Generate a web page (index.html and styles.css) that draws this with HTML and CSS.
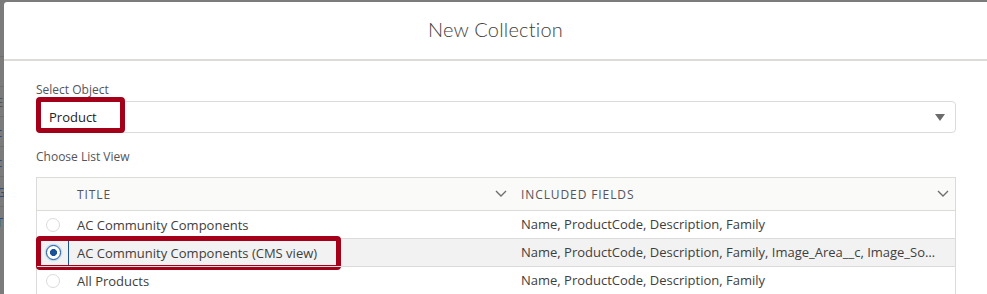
FILE: index.html
```html
<!DOCTYPE html>
<html lang="en">
<head>
  <meta charset="UTF-8">
  <title>New Collection</title>
  <link rel="stylesheet" href="styles.css">
</head>
<body>

  <div class="page">
    <div class="backdrop">
      <div class="bd-row"></div>
      <div class="bd-row">E</div>
      <div class="bd-row link">c</div>
      <div class="bd-row link">c</div>
      <div class="bd-row link">G</div>
      <div class="bd-row link">T</div>
    </div>

    <div class="modal">
      <div class="modal-header">
        <h2 class="modal-title">New Collection</h2>
      </div>

      <div class="modal-body">
        <label class="field-label" for="object">Select Object</label>
        <div class="select-wrap">
          <div class="select" id="object">
            <span>Product</span>
            <span class="caret"></span>
          </div>
          <div class="mark mark-select"></div>
        </div>

        <div class="field-label list-label">Choose List View</div>

        <div class="table">
          <div class="row head">
            <div class="cell"></div>
            <div class="cell col-title">
              <span>Title</span>
              <svg class="chev" viewBox="0 0 12 8" width="12" height="8"><polyline points="1,1 6,6 11,1" /></svg>
            </div>
            <div class="cell col-fields">
              <span>Included Fields</span>
              <svg class="chev" viewBox="0 0 12 8" width="12" height="8"><polyline points="1,1 6,6 11,1" /></svg>
            </div>
          </div>

          <div class="row">
            <div class="cell radio-cell"><span class="radio"></span></div>
            <div class="cell col-title">AC Community Components</div>
            <div class="cell col-fields">Name, ProductCode, Description, Family</div>
          </div>

          <div class="row selected">
            <div class="cell radio-cell"><span class="radio checked"></span></div>
            <div class="cell col-title focus">AC Community Components (CMS view)</div>
            <div class="cell col-fields">Name, ProductCode, Description, Family, Image_Area__c, Image_Source__c, Image_Title__c</div>
            <div class="mark mark-row"></div>
          </div>

          <div class="row">
            <div class="cell radio-cell"><span class="radio"></span></div>
            <div class="cell col-title">All Products</div>
            <div class="cell col-fields">Name, ProductCode, Description, Family</div>
          </div>
        </div>
      </div>
    </div>
  </div>

</body>
</html>
```

FILE: styles.css
```css
body {
  margin: 0;
  background-color: #7b7b7b;
  font-family: 'Open Sans', 'Noto Sans', sans-serif;
  color: #3e3e3c;
  overflow: hidden;
}

.page {
  display: flex;
  height: 294px;
}

/* the page behind the modal, barely visible */
.backdrop {
  width: 4px;
  padding-top: 56px;
  overflow: hidden;
  font-size: 13px;
  color: #555;
}

.bd-row {
  height: 29px;
  line-height: 30px;
  border-top: 1px solid #6e6e6e;
  text-indent: -4px;
}

.bd-row.link {
  color: #2e4c7d;
}

.modal {
  flex: 1;
  margin-top: 2px;
  background-color: #fff;
  border-top-left-radius: 3px;
}

.modal-header {
  height: 59px;
  border-bottom: 2px solid #dddbda;
  display: flex;
  align-items: center;
  justify-content: center;
  box-sizing: border-box;
  padding-bottom: 3px;
}

.modal-title {
  margin: 0;
  font-family: 'Lato', sans-serif;
  font-weight: 300;
  font-size: 20px;
  color: #3e3e3c;
  letter-spacing: 0.2px;
}

.modal-body {
  padding: 20px 31px 0 32px;
}

.field-label {
  display: block;
  font-size: 12px;
  line-height: 18px;
  color: #54545a;
}

.select-wrap {
  position: relative;
  margin-top: 2px;
}

.select {
  height: 30px;
  border: 1px solid #dddbda;
  border-radius: 4px;
  display: flex;
  align-items: center;
  justify-content: space-between;
  padding: 0 10px 0 12px;
  font-size: 13px;
  color: #222;
}

.caret {
  width: 0;
  height: 0;
  border-left: 5px solid transparent;
  border-right: 5px solid transparent;
  border-top: 7px solid #6b6b6b;
}

.list-label {
  margin-top: 15px;
}

.table {
  margin-top: 11px;
  border: 1px solid #dddbda;
  border-bottom: none;
}

.row {
  position: relative;
  display: grid;
  grid-template-columns: 31px 442px 1fr;
  height: 27px;
  border-top: 1px solid #dddbda;
  font-size: 13px;
}

.row.head {
  height: 32px;
  border-top: none;
  background-color: #fafaf9;
  font-size: 12px;
  text-transform: uppercase;
  letter-spacing: 0.9px;
  color: #54545a;
}

.row.selected {
  background-color: #f3f2f2;
}

.cell {
  display: flex;
  align-items: center;
  min-width: 0;
}

.col-title {
  padding-left: 9px;
  justify-content: space-between;
  padding-right: 4px;
}

.col-fields {
  padding-left: 11px;
  padding-right: 12px;
  display: block;
  line-height: 27px;
  white-space: nowrap;
  overflow: hidden;
  text-overflow: ellipsis;
}

.head .col-fields {
  display: flex;
  justify-content: space-between;
  line-height: normal;
  padding-left: 11px;
  padding-right: 6px;
}

.head .col-title {
  padding-right: 3px;
}

.chev {
  fill: none;
  stroke: #706e6b;
  stroke-width: 1.4;
}

.radio-cell {
  justify-content: center;
  padding-left: 1px;
}

.radio {
  width: 14px;
  height: 14px;
  border: 1px solid #dddbda;
  border-radius: 50%;
  background-color: #fff;
  box-sizing: border-box;
}

.radio.checked {
  width: 15px;
  height: 15px;
  border: 1px solid #1b5297;
  box-shadow: 0 0 2px #1589ee;
  background: radial-gradient(circle, #1b5297 0, #1b5297 3.2px, #fff 3.8px);
}

.focus {
  border-left: 1px solid #1b5297;
  padding-left: 8px;
}

/* red annotation frames */
.mark {
  position: absolute;
  border: 5px solid #a50019;
  border-radius: 4px;
  box-sizing: border-box;
}

.mark-select {
  left: 0;
  top: -4px;
  width: 89px;
  height: 36px;
}

.mark-row {
  left: -1px;
  top: -3px;
  width: 305px;
  height: 34px;
}
```
